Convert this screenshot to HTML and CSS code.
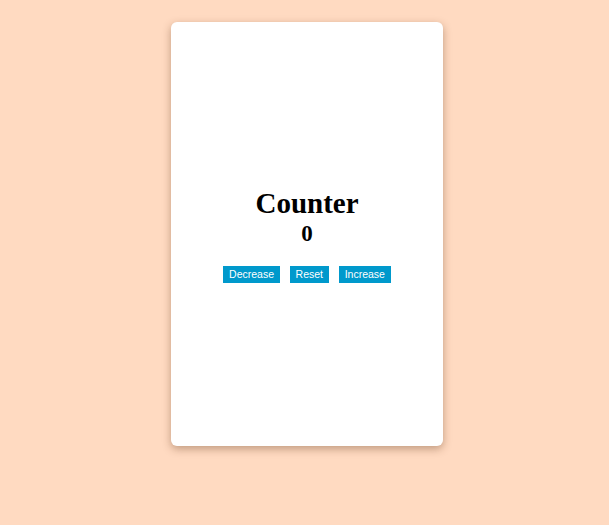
FILE: index.html
```html
<!DOCTYPE html>
<html>
<head>
<meta charset="utf-8">
<link rel="stylesheet" href="styles.css">
</head>
<body>
<div class="page">
  <div class="card">
    <h1 class="title">Counter</h1>
    <h2 class="count">0</h2>
    <div class="buttons">
      <button class="btn">Decrease</button>
      <button class="btn">Reset</button>
      <button class="btn">Increase</button>
    </div>
  </div>
</div>
</body>
</html>
```
FILE: styles.css
```css
html, body {
  margin: 0;
  padding: 0;
}
body {
  background: #ffdac1;
  width: 609px;
  height: 525px;
  overflow: hidden;
}
.page {
  display: flex;
  justify-content: center;
  padding: 22px 0 0 5px;
}
.card {
  box-sizing: border-box;
  width: 272px;
  height: 424px;
  padding-top: 1px;
  background: #fff;
  border-radius: 6px;
  box-shadow: 0 3px 8px rgba(90, 50, 20, 0.38);
  display: flex;
  flex-direction: column;
  align-items: center;
  justify-content: center;
  font-family: "Liberation Serif", "Times New Roman", serif;
}
.title {
  margin: 0;
  font-size: 29px;
  line-height: 32px;
  font-weight: bold;
  color: #000;
}
.count {
  margin: 1px 0 0;
  font-size: 23px;
  line-height: 28px;
  font-weight: bold;
  color: #000;
}
.buttons {
  display: flex;
  gap: 9.6px;
  margin-top: 18px;
}
.btn {
  background: #0099cc;
  color: #fff;
  border: none;
  font-family: "Liberation Sans", Arial, sans-serif;
  font-size: 10.5px;
  height: 17px;
  line-height: 17px;
  padding: 0 6px;
  margin: 0;
  border-radius: 0;
}
```
